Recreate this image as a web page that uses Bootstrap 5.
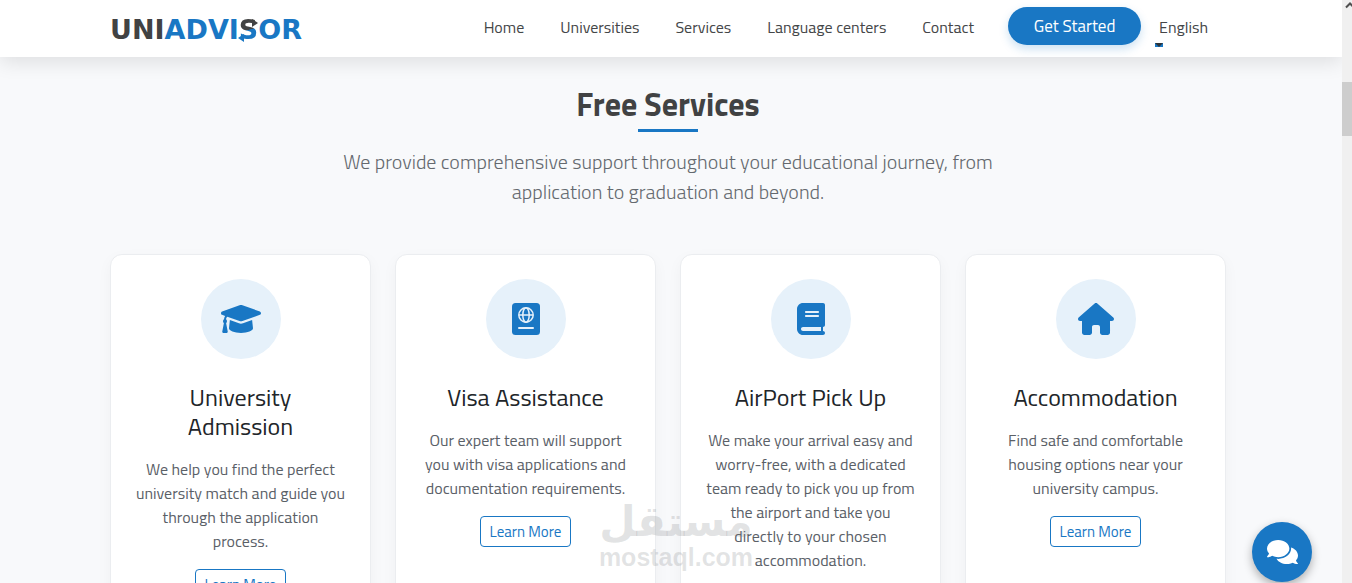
<!DOCTYPE html>
<html lang="en">
<head>
<meta charset="utf-8">
<meta name="viewport" content="width=device-width, initial-scale=1">
<title>UniAdvisor – Free Services</title>
<link href="https://cdn.jsdelivr.net/npm/bootstrap@5.3.0/dist/css/bootstrap.min.css" rel="stylesheet">
<style>
  :root { --brand: #1977c4; --ink: #444648; --soft: #e6f1fa; }
  body { font-family: "Titillium Web", Cairo, Roboto, "Liberation Sans", sans-serif; background: #f8f9fb; }
  .viewport { height: 100vh; overflow: hidden; }
  .page-pane { min-width: 0; }
  .page-inner { padding-right: 6px; }
  .site-header { background: #fff; box-shadow: 0 5px 20px rgba(0,0,0,.11); z-index: 10; }
  .site-header .navbar { min-height: 57px; }
  .brand-logo { font: 700 27px/30px "DejaVu Sans", sans-serif; color: var(--brand); padding-top: 3px; }
  .brand-logo:hover { color: var(--brand); }
  .brand-dark { color: #414243; }
  .brand-s { background: linear-gradient(165deg, #414243 50%, var(--brand) 52%); -webkit-background-clip: text; background-clip: text; color: transparent; }
  .brand-arrows { left: -2px; top: 2px; width: 24px; height: 26px; }
  .menu-list { padding-bottom: 4px; }
  .site-header .menu-list .nav-link { color: var(--ink); font-size: 16px; line-height: 24px; padding: 8px 18px; }
  .btn-start, .btn-start:hover { background: var(--brand); color: #fff; }
  .btn-start { font-weight: 500; font-size: 17px; line-height: 24px; padding: 7px 0; width: 133px; border: 0; border-radius: 19px; box-shadow: 0 4px 10px rgba(25,119,196,.22); margin: 0 0 2px 16px; }
  .lang-mark { left: 14px; bottom: 0; width: 8px; height: 4px; background: var(--brand); }
  .lang-mark::before { content: ""; display: block; border: 4px solid transparent; border-top-color: #2c3338; border-bottom: 0; }
  .section-title { font-size: 32px; line-height: 38px; font-weight: 700; color: #414243; padding-top: 28px; margin: 0 0 6px; }
  .title-rule { width: 60px; height: 3px; background: var(--brand); }
  .intro { max-width: 680px; font-size: 20px; line-height: 30px; font-weight: 300; color: #64696f; margin: 15px auto 47px; }
  .service-card { border: 1px solid #ebedf0; border-radius: 12px; box-shadow: 0 5px 15px rgba(0,0,0,.04); padding: 24px; }
  .service-icon { width: 80px; height: 80px; background: var(--soft); color: var(--brand); }
  .service-card h3 { font-size: 24px; line-height: 29px; font-weight: 400; color: #212529; margin-bottom: 16px; }
  .service-card p { font-size: 16px; line-height: 24px; color: #5a6067; }
  .btn-more { border: 1px solid var(--brand); color: var(--brand); font-size: 15px; font-weight: 500; line-height: 21px; padding: 4px 0; width: 91px; border-radius: 4px; }
  .btn-more:hover { background: var(--brand); color: #fff; }
  .chat-btn { right: 40px; bottom: 1px; width: 60px; height: 60px; background: var(--brand); color: #fff; box-shadow: 0 4px 10px rgba(0,0,0,.3); z-index: 12; }
  .watermark { left: 598px; bottom: 12px; width: 156px; color: rgba(125,128,132,.22); pointer-events: none; z-index: 11; }
  .wm-arabic { font: 700 42px/42px "DejaVu Sans", sans-serif; }
  .wm-latin { font: 700 25px/28px "Liberation Sans", sans-serif; }
  .scroll-track { width: 10px; background: #f0f0f0; z-index: 11; }
  .scroll-thumb { height: 54px; margin-top: 70px; background: #cdcdcd; }
</style>
</head>
<body>
<div class="viewport d-flex position-relative">
  <div class="page-pane flex-grow-1">
    <header class="site-header position-relative">
      <div class="page-inner">
        <nav class="navbar navbar-expand p-0">
          <div class="container">
            <a class="brand-logo text-decoration-none" href="#"><span class="brand-dark">UNI</span>ADVI<span class="position-relative d-inline-block"><span class="brand-s">S</span><svg class="brand-arrows position-absolute" viewBox="0 0 24 26" aria-hidden="true"><path fill="#414243" d="M15 2l6 4-6 4z"/><path fill="#1977c4" d="M7 17l-6 4 6 4z"/></svg></span>OR</a>
            <ul class="navbar-nav menu-list align-items-center">
              <li class="nav-item"><a class="nav-link" href="#">Home</a></li>
              <li class="nav-item"><a class="nav-link" href="#">Universities</a></li>
              <li class="nav-item"><a class="nav-link" href="#">Services</a></li>
              <li class="nav-item"><a class="nav-link" href="#">Language centers</a></li>
              <li class="nav-item"><a class="nav-link" href="#">Contact</a></li>
              <li class="nav-item"><button type="button" class="btn btn-start">Get Started</button></li>
              <li class="nav-item position-relative"><a class="nav-link" href="#">English</a><span class="lang-mark position-absolute"></span></li>
            </ul>
          </div>
        </nav>
      </div>
    </header>
    <main class="page-inner">
      <section class="container text-center">
        <h2 class="section-title">Free Services</h2>
        <div class="title-rule mx-auto"></div>
        <p class="intro">We provide comprehensive support throughout your educational journey, from application to graduation and beyond.</p>
        <div class="row row-cols-4">
          <div class="col">
            <article class="card service-card h-100 d-block">
              <div class="service-icon rounded-circle d-flex align-items-center justify-content-center mx-auto mb-4">
                <svg width="40" height="28" viewBox="0 64 640 384" preserveAspectRatio="none" fill="currentColor" aria-hidden="true"><path d="M622.34 153.2L343.4 67.5c-15.2-4.67-31.6-4.67-46.79 0L17.66 153.2c-23.54 7.23-23.54 38.36 0 45.59l48.63 14.94c-10.67 13.19-17.23 29.28-17.88 46.9C38.78 266.15 32 276.11 32 288c0 10.78 5.68 19.85 13.86 25.65L20.33 428.53C18.11 438.52 25.71 448 35.94 448h56.11c10.24 0 17.84-9.48 15.62-19.47L82.14 313.65C90.32 307.85 96 298.78 96 288c0-11.57-6.47-21.25-15.66-26.87.76-15.02 8.44-28.3 20.69-36.72L296.6 284.5c9.06 2.78 26.44 6.25 46.79 0l278.95-85.7c23.55-7.24 23.55-38.36 0-45.6zM352.79 315.09c-28.53 8.76-52.84 3.92-65.59 0l-145.02-44.55L128 384c0 35.35 85.96 64 192 64s192-28.65 192-64l-14.18-113.47-145.03 44.56z"/></svg>
              </div>
              <h3>University Admission</h3>
              <p>We help you find the perfect university match and guide you through the application process.</p>
              <a class="btn btn-more" href="#">Learn More</a>
            </article>
          </div>
          <div class="col">
            <article class="card service-card h-100 d-block">
              <div class="service-icon rounded-circle d-flex align-items-center justify-content-center mx-auto mb-4">
                <svg width="28" height="32" viewBox="0 0 28 32" aria-hidden="true"><rect width="28" height="32" rx="3.5" fill="currentColor"/><g fill="none" stroke="#e6f1fa" stroke-width="1.5"><circle cx="14" cy="12" r="7.2"/><ellipse cx="14" cy="12" rx="3.2" ry="7.2"/><path d="M7 12h14"/><path d="M7 25h14" stroke-width="2" stroke-linecap="round"/></g></svg>
              </div>
              <h3>Visa Assistance</h3>
              <p>Our expert team will support you with visa applications and documentation requirements.</p>
              <a class="btn btn-more" href="#">Learn More</a>
            </article>
          </div>
          <div class="col">
            <article class="card service-card h-100 d-block">
              <div class="service-icon rounded-circle d-flex align-items-center justify-content-center mx-auto mb-4">
                <svg width="28" height="32" viewBox="0 0 448 512" fill="currentColor" aria-hidden="true"><path fill-rule="evenodd" d="M96 0C43 0 0 43 0 96V416c0 53 43 96 96 96H416c17.700 0 32-14.300 32-32s-14.300-32-32-32V384c17.700 0 32-14.300 32-32V32c0-17.700-14.300-32-32-32H96zm0 384H384v64H96c-17.700 0-32-14.300-32-32s14.300-32 32-32zm48-256H336c8.800 0 16 7.200 16 16s-7.200 16-16 16H144c-8.800 0-16-7.200-16-16s7.200-16 16-16zm0 64H336c8.800 0 16 7.200 16 16s-7.200 16-16 16H144c-8.800 0-16-7.200-16-16s7.200-16 16-16z"/></svg>
              </div>
              <h3>AirPort Pick Up</h3>
              <p>We make your arrival easy and worry-free, with a dedicated team ready to pick you up from the airport and take you directly to your chosen accommodation.</p>
              <a class="btn btn-more" href="#">Learn More</a>
            </article>
          </div>
          <div class="col">
            <article class="card service-card h-100 d-block">
              <div class="service-icon rounded-circle d-flex align-items-center justify-content-center mx-auto mb-4">
                <svg width="36" height="32" viewBox="0 0 576 512" fill="currentColor" aria-hidden="true"><path d="M575.8 255.500c0 18-15 32.100-32 32.100h-32l.700 160.200c0 2.700-.200 5.400-.500 8.100V472c0 22.100-17.900 40-40 40H392c-22.100 0-40-17.900-40-40V384c0-17.700-14.300-32-32-32H256c-17.700 0-32 14.300-32 32v88c0 22.100-17.900 40-40 40H104c-22.100 0-40-17.900-40-40V287.600H32c-18 0-32-14-32-32.100c0-9 3-17 10-24L266.400 8c7-7 15-8 22-8s15 2 21 7L564.800 231.500c8 7 12 15 11 24z"/></svg>
              </div>
              <h3>Accommodation</h3>
              <p>Find safe and comfortable housing options near your university campus.</p>
              <a class="btn btn-more" href="#">Learn More</a>
            </article>
          </div>
        </div>
      </section>
    </main>
  </div>
  <div class="scroll-track position-relative flex-shrink-0" aria-hidden="true">
    <svg class="d-block" width="10" height="12" viewBox="0 0 10 12"><path d="M4 7.500l4-4 4 4" fill="none" stroke="#505050" stroke-width="2"/></svg>
    <div class="scroll-thumb"></div>
  </div>
  <div class="watermark position-absolute text-center">
    <div class="wm-arabic" lang="ar" dir="rtl">مستقل</div>
    <div class="wm-latin">mostaql.com</div>
  </div>
  <button type="button" class="chat-btn btn rounded-circle position-absolute d-flex align-items-center justify-content-center border-0 p-0" aria-label="Chat">
    <svg width="31" height="28" viewBox="0 0 576 512" fill="currentColor" aria-hidden="true"><path d="M416 192c0-88.400-93.100-160-208-160S0 103.600 0 192c0 34.300 14.100 65.900 38 92-13.400 30.200-35.500 54.200-35.800 54.500-2.200 2.300-2.800 5.700-1.500 8.700S4.800 352 8 352c36.600 0 66.900-12.300 88.700-25 32.200 15.700 70.300 25 111.300 25 114.900 0 208-71.600 208-160zm122 220c23.900-26 38-57.700 38-92 0-66.900-53.500-124.200-129.300-148.100.9 6.600 1.300 13.300 1.300 20.100 0 105.900-107.700 192-240 192-10.800 0-21.300-.8-31.700-1.900C207.800 439.600 281.800 480 368 480c41 0 79.100-9.200 111.300-25 21.800 12.700 52.100 25 88.700 25 3.200 0 6.100-1.900 7.300-4.800 1.300-2.900.7-6.300-1.500-8.700-.3-.3-22.400-24.200-35.800-54.500z"/></svg>
  </button>
</div>
<script src="https://cdn.jsdelivr.net/npm/bootstrap@5.3.0/dist/js/bootstrap.bundle.min.js"></script>
</body>
</html>
